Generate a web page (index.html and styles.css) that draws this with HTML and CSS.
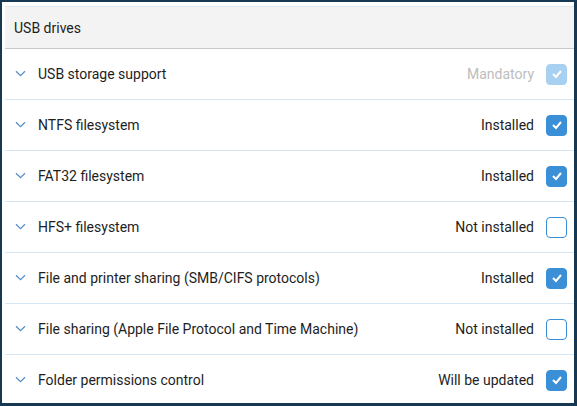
FILE: index.html
```html
<!DOCTYPE html>
<html>
<head>
<meta charset="utf-8">
<link rel="stylesheet" href="styles.css">
</head>
<body>
<div class="panel">
  <div class="header">USB drives</div>
  <div class="row">
    <svg class="chev" width="11" height="7" viewBox="0 0 11 7"><path d="M1 1.2 L5.5 5.7 L10 1.2" fill="none" stroke="#5b8fc7" stroke-width="1.3"/></svg>
    <span class="label">USB storage support</span>
    <span class="status muted">Mandatory</span>
    <span class="cb checked disabled"><svg width="12" height="10" viewBox="0 0 12 10"><path d="M2 5 L5 8 L10 2" fill="none" stroke="#fff" stroke-width="2"/></svg></span>
  </div>
  <div class="row">
    <svg class="chev" width="11" height="7" viewBox="0 0 11 7"><path d="M1 1.2 L5.5 5.7 L10 1.2" fill="none" stroke="#5b8fc7" stroke-width="1.3"/></svg>
    <span class="label">NTFS filesystem</span>
    <span class="status">Installed</span>
    <span class="cb checked"><svg width="12" height="10" viewBox="0 0 12 10"><path d="M2 5 L5 8 L10 2" fill="none" stroke="#fff" stroke-width="2"/></svg></span>
  </div>
  <div class="row">
    <svg class="chev" width="11" height="7" viewBox="0 0 11 7"><path d="M1 1.2 L5.5 5.7 L10 1.2" fill="none" stroke="#5b8fc7" stroke-width="1.3"/></svg>
    <span class="label">FAT32 filesystem</span>
    <span class="status">Installed</span>
    <span class="cb checked"><svg width="12" height="10" viewBox="0 0 12 10"><path d="M2 5 L5 8 L10 2" fill="none" stroke="#fff" stroke-width="2"/></svg></span>
  </div>
  <div class="row">
    <svg class="chev" width="11" height="7" viewBox="0 0 11 7"><path d="M1 1.2 L5.5 5.7 L10 1.2" fill="none" stroke="#5b8fc7" stroke-width="1.3"/></svg>
    <span class="label">HFS+ filesystem</span>
    <span class="status">Not installed</span>
    <span class="cb"></span>
  </div>
  <div class="row">
    <svg class="chev" width="11" height="7" viewBox="0 0 11 7"><path d="M1 1.2 L5.5 5.7 L10 1.2" fill="none" stroke="#5b8fc7" stroke-width="1.3"/></svg>
    <span class="label">File and printer sharing (SMB/CIFS protocols)</span>
    <span class="status">Installed</span>
    <span class="cb checked"><svg width="12" height="10" viewBox="0 0 12 10"><path d="M2 5 L5 8 L10 2" fill="none" stroke="#fff" stroke-width="2"/></svg></span>
  </div>
  <div class="row">
    <svg class="chev" width="11" height="7" viewBox="0 0 11 7"><path d="M1 1.2 L5.5 5.7 L10 1.2" fill="none" stroke="#5b8fc7" stroke-width="1.3"/></svg>
    <span class="label">File sharing (Apple File Protocol and Time Machine)</span>
    <span class="status">Not installed</span>
    <span class="cb"></span>
  </div>
  <div class="row last">
    <svg class="chev" width="11" height="7" viewBox="0 0 11 7"><path d="M1 1.2 L5.5 5.7 L10 1.2" fill="none" stroke="#5b8fc7" stroke-width="1.3"/></svg>
    <span class="label">Folder permissions control</span>
    <span class="status">Will be updated</span>
    <span class="cb checked"><svg width="12" height="10" viewBox="0 0 12 10"><path d="M2 5 L5 8 L10 2" fill="none" stroke="#fff" stroke-width="2"/></svg></span>
  </div>
</div>
</body>
</html>
```
FILE: styles.css
```css
html, body {
  margin: 0;
  height: 100%;
}
body {
  background: #163852;
  padding: 2px 3px 3px 2px;
  box-sizing: border-box;
  font-family: Roboto, "Liberation Sans", sans-serif;
  font-size: 14px;
  color: #1e1e1e;
  overflow: hidden;
}
.panel {
  background: #fff;
  height: 100%;
  padding: 4px 0 0 3px;
  box-sizing: border-box;
  overflow: hidden;
}
.header {
  height: 41px;
  border-top: 1px solid #dde7ef;
  border-bottom: 1px solid #c9c9c9;
  background: #f3f3f3;
  display: flex;
  align-items: center;
  padding-left: 9px;
}
.row {
  height: 50px;
  border-bottom: 1px solid #d6e6f2;
  display: flex;
  align-items: center;
  padding: 0 7px 0 10px;
}
.row.last {
  border-bottom: none;
}
.chev {
  flex: none;
  margin-right: 12px;
  margin-top: -2px;
}
.label {
  flex: 1;
}
.status {
  margin-right: 12px;
}
.status.muted {
  color: #bdbdbd;
}
.cb {
  width: 21px;
  height: 21px;
  box-sizing: border-box;
  border: 1.5px solid #3a8fd6;
  border-radius: 4px;
  background: #fff;
  display: flex;
  align-items: center;
  justify-content: center;
}
.cb.checked {
  background: #3a8fd6;
  border-color: #3a8fd6;
}
.cb.checked.disabled {
  background: #a8d1f1;
  border-color: #a8d1f1;
}
```
